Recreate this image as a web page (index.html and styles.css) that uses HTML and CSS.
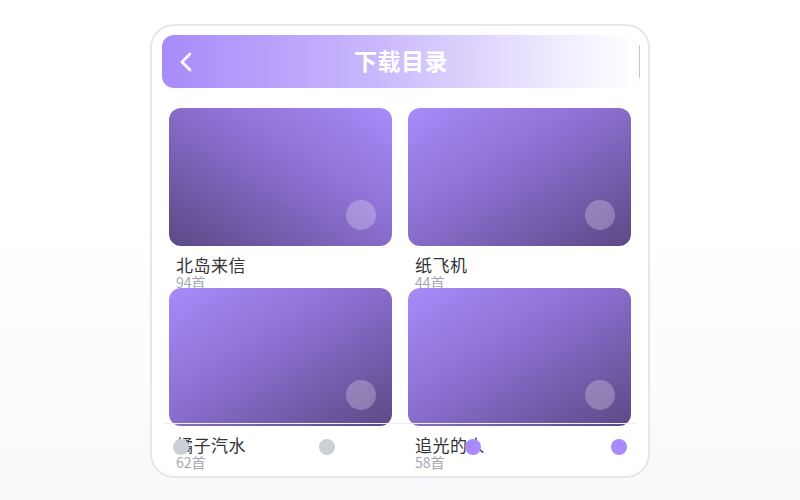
FILE: index.html
```html
<!DOCTYPE html>
<html lang="zh-CN">
<head>
    <meta charset="UTF-8">
    <meta name="viewport" content="width=device-width, initial-scale=1.0">
    <title>下载目录</title>
    <link rel="stylesheet" href="styles.css">
</head>
<body>
    <div class="phone">
        <header class="top-bar">
            <span class="back">
                <svg width="14" height="22" viewBox="0 0 14 22">
                    <path d="M11 3 L3 11 L11 19" fill="none" stroke="#fff" stroke-width="2.6" stroke-linecap="round" stroke-linejoin="round"/>
                </svg>
            </span>
            <h1>下载目录</h1>
        </header>

        <div class="album-grid">
            <div class="album">
                <div class="cover cover-first"><span class="play"></span></div>
                <div class="name">北岛来信</div>
                <div class="count">94首</div>
            </div>
            <div class="album">
                <div class="cover"><span class="play"></span></div>
                <div class="name">纸飞机</div>
                <div class="count">44首</div>
            </div>
            <div class="album">
                <div class="cover"><span class="play"></span></div>
                <div class="name">橘子汽水</div>
                <div class="count">62首</div>
            </div>
            <div class="album">
                <div class="cover"><span class="play"></span></div>
                <div class="name">追光的人</div>
                <div class="count">58首</div>
            </div>
        </div>

        <nav class="tab-bar">
            <span class="dot"></span>
            <span class="dot"></span>
            <span class="dot dot-on"></span>
            <span class="dot dot-on"></span>
        </nav>
    </div>
</body>
</html>
```

FILE: styles.css
```css
html, body {
    height: 100%;
}
body {
    margin: 0;
    font-family: "Noto Sans CJK SC", "Noto Sans", sans-serif;
    background: linear-gradient(#ffffff 0%, #ffffff 45%, #f9f9fb 100%);
}
.phone {
    position: relative;
    box-sizing: border-box;
    width: 500px;
    height: 454px;
    margin: 24px auto 0;
    padding-top: 9px;
    border: 2px solid #e6e6eb;
    border-radius: 24px;
    background: #fff;
}
.top-bar {
    position: relative;
    display: flex;
    align-items: center;
    justify-content: center;
    height: 53px;
    margin: 0 8px 0 10px;
    border-radius: 12px;
    background: linear-gradient(90deg, #a78bfa 0%, #c9b8fc 45%, #f7f4ff 90%, #ffffff 100%);
}
.top-bar::after {
    content: "";
    position: absolute;
    right: 0;
    top: 10px;
    bottom: 10px;
    width: 1px;
    background: #c8bafc;
}
.back {
    position: absolute;
    left: 17px;
    top: 16px;
    display: flex;
}
.top-bar h1 {
    margin: 0 0 4px;
    color: #fff;
    font-size: 23px;
    line-height: 26px;
    font-weight: 700;
    letter-spacing: 0.5px;
}
.album-grid {
    display: grid;
    grid-template-columns: 1fr 1fr;
    grid-auto-rows: 180px;
    column-gap: 16px;
    padding: 20px 17px 0;
}
.album {
    min-width: 0;
}
.cover {
    position: relative;
    height: 138px;
    border-radius: 12px;
    background: linear-gradient(to bottom right, #a78bfa 0%, #8b6fd0 45%, #5b4a86 100%);
}
.cover-first {
    background: linear-gradient(to bottom left, #a78bfa 0%, #8b6fd0 45%, #5b4a86 100%);
}
.play {
    position: absolute;
    right: 16px;
    bottom: 16px;
    width: 30px;
    height: 30px;
    border-radius: 50%;
    background: rgba(255, 255, 255, 0.25);
}
.name {
    margin-top: 10px;
    padding-left: 7px;
    font-size: 17px;
    line-height: 18px;
    letter-spacing: 0.5px;
    color: #333;
}
.count {
    padding-left: 7px;
    font-size: 14px;
    line-height: 16px;
    color: #a3a8b0;
}
.tab-bar {
    position: absolute;
    left: 11px;
    right: 11px;
    bottom: 7px;
    height: 45px;
    display: flex;
    align-items: center;
    justify-content: space-between;
    padding: 0 10px;
    border-top: 1px solid #eeeef2;
}
.dot {
    width: 16px;
    height: 16px;
    border-radius: 50%;
    background: #cbcfd6;
}
.dot-on {
    background: #a78bfa;
}
```
